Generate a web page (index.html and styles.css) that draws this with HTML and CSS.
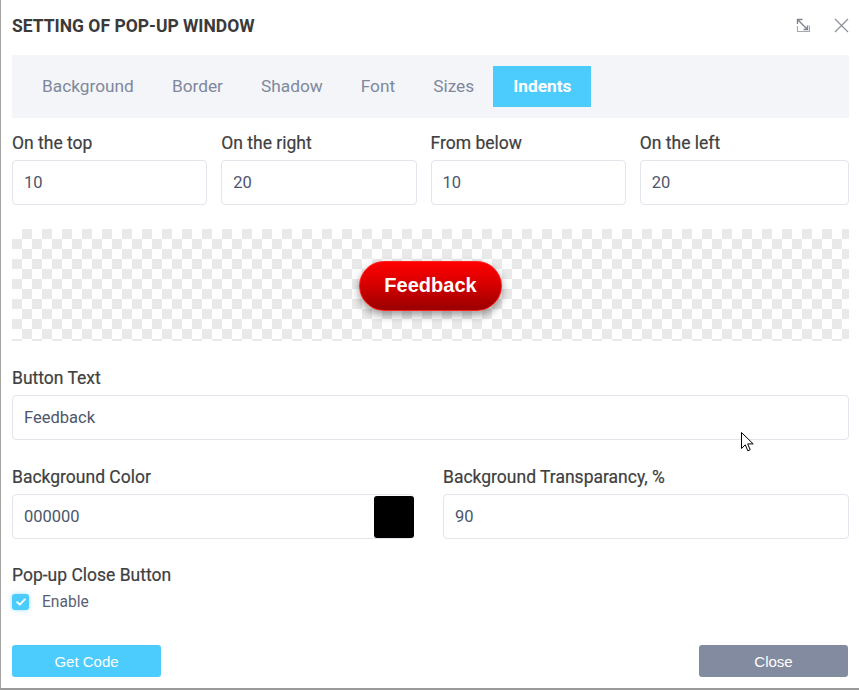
FILE: index.html
```html
<!DOCTYPE html>
<html>
<head>
<meta charset="utf-8">
<link rel="stylesheet" href="styles.css">
</head>
<body>
<div class="dialog">
  <div class="header">
    <div class="title">SETTING OF POP-UP WINDOW</div>
    <div class="actions">
      <svg class="icon" width="15" height="15" viewBox="0 0 15 15">
        <path d="M1.5 8V13.5H13.5V7.5M1.5 1.5H7" fill="none" stroke="#a4a8b0" stroke-width="1.1"/>
        <path d="M1.5 6V1.5H6M1.5 1.5L11.5 11.5M7.5 11.5H11.5V7.5" fill="none" stroke="#80858f" stroke-width="1.4"/>
      </svg>
      <svg class="icon" width="15" height="15" viewBox="0 0 15 15">
        <path d="M1 1L14 14M14 1L1 14" fill="none" stroke="#8b909a" stroke-width="1.2"/>
      </svg>
    </div>
  </div>

  <div class="tabs">
    <div class="tab">Background</div>
    <div class="tab">Border</div>
    <div class="tab">Shadow</div>
    <div class="tab">Font</div>
    <div class="tab">Sizes</div>
    <div class="tab active">Indents</div>
  </div>

  <div class="grid4">
    <div class="field">
      <div class="label">On the top</div>
      <div class="input">10</div>
    </div>
    <div class="field">
      <div class="label">On the right</div>
      <div class="input">20</div>
    </div>
    <div class="field">
      <div class="label">From below</div>
      <div class="input">10</div>
    </div>
    <div class="field last">
      <div class="label">On the left</div>
      <div class="input">20</div>
    </div>
  </div>

  <div class="preview">
    <div class="feedback">Feedback</div>
  </div>

  <div class="block">
    <div class="label">Button Text</div>
    <div class="input">Feedback</div>
  </div>

  <div class="grid2">
    <div class="field2">
      <div class="label">Background Color</div>
      <div class="input color">
        <span>000000</span>
        <span class="swatch"></span>
      </div>
    </div>
    <div class="field2">
      <div class="label">Background Transparancy, %</div>
      <div class="input">90</div>
    </div>
  </div>

  <div class="block close-block">
    <div class="label">Pop-up Close Button</div>
    <div class="check-row">
      <span class="checkbox">
        <svg width="10" height="8" viewBox="0 0 10 8"><path d="M1.2 4.2L3.8 6.6L8.8 1.4" fill="none" stroke="#fff" stroke-width="1.8" stroke-linecap="round" stroke-linejoin="round"/></svg>
      </span>
      <span class="check-label">Enable</span>
    </div>
  </div>

  <div class="footer">
    <div class="btn primary">Get Code</div>
    <div class="btn secondary">Close</div>
  </div>

  <svg class="cursor" width="14" height="21" viewBox="0 0 14 21">
    <path d="M0.5 0.5V16.5L4.3 12.8L6.8 18.8L9.2 17.8L6.7 11.9H12.2Z" fill="#fff" stroke="#000" stroke-width="1" stroke-linejoin="round"/>
  </svg>
</div>
</body>
</html>
```

FILE: styles.css
```css
* { box-sizing: border-box; }

html, body {
  margin: 0;
  padding: 0;
  background: #ffffff;
}

body {
  font-family: Roboto, "Liberation Sans", Arial, sans-serif;
}

.dialog {
  position: relative;
  width: 859px;
  height: 690px;
  border-left: 1px solid #a3a3a3;
  border-bottom: 2px solid #9a9a9a;
  padding: 0 10px 0 11px;
  background: #fff;
}

.header {
  height: 55px;
  display: flex;
  align-items: center;
  justify-content: space-between;
  padding-bottom: 4px;
}

.title {
  font-size: 17.5px;
  font-weight: 700;
  color: #3a3a3a;
}

.actions {
  display: flex;
  gap: 23px;
  align-items: center;
}

.icon { display: block; }

.tabs {
  height: 63px;
  background: #f4f5f9;
  display: flex;
  align-items: center;
  padding-left: 11px;
}

.tab {
  height: 41px;
  line-height: 41px;
  padding: 0 19px;
  font-size: 17.3px;
  color: #7f889c;
}

.tab.active {
  background: #4ccbfd;
  color: #fff;
  font-weight: 700;
  padding: 0 20px;
}

.grid4 {
  display: grid;
  grid-template-columns: repeat(4, 1fr);
  margin-top: 15px;
}

.field { padding-right: 14px; }
.field.last { padding-right: 0; }

.label {
  font-size: 17.5px;
  font-weight: 400;
  line-height: 20px;
  color: #404040;
  margin-bottom: 7px;
  -webkit-text-stroke: 0.2px #404040;
}

.input {
  height: 45px;
  border: 1px solid #e3e5ec;
  border-radius: 4px;
  background: #fff;
  padding: 0 11px;
  display: flex;
  align-items: center;
  font-size: 16.5px;
  color: #4d566c;
}

.preview {
  margin-top: 24px;
  height: 112px;
  background-color: #fff;
  background-image:
    linear-gradient(45deg, #e9e9e9 25%, transparent 25%, transparent 75%, #e9e9e9 75%),
    linear-gradient(45deg, #e9e9e9 25%, transparent 25%, transparent 75%, #e9e9e9 75%);
  background-size: 20px 20px;
  background-position: 0 0, 10px 10px;
  display: flex;
  align-items: center;
  justify-content: center;
}

.feedback {
  width: 143px;
  height: 50px;
  border-radius: 25px;
  background: linear-gradient(to bottom, #ff0000 0%, #d80000 45%, #990000 100%);
  border: 1px solid #ff2020;
  box-shadow: 0 4px 9px rgba(0, 0, 0, 0.4);
  display: flex;
  align-items: center;
  justify-content: center;
  font-family: "Liberation Sans", Arial, sans-serif;
  font-weight: 700;
  font-size: 20px;
  color: #fff;
  margin-top: 1px;
}

.block { margin-top: 27px; }

.grid2 {
  display: grid;
  grid-template-columns: 402px 1fr;
  column-gap: 29px;
  margin-top: 27px;
}

.input.color {
  justify-content: space-between;
  padding-right: 0;
}

.swatch {
  width: 40px;
  height: 42px;
  background: #000;
  border-radius: 3px;
  margin-right: -1px;
}

.close-block { margin-top: 26px; }

.close-block .label { margin-bottom: 9px; }

.check-row {
  display: flex;
  align-items: center;
  height: 16px;
}

.checkbox {
  width: 17px;
  height: 16px;
  border-radius: 3px;
  background: #4ccbfd;
  box-shadow: 0 0 4px rgba(76, 203, 253, 0.6);
  display: flex;
  align-items: center;
  justify-content: center;
}

.check-label {
  margin-left: 13px;
  font-size: 15.6px;
  color: #5a6176;
}

.footer {
  display: flex;
  justify-content: space-between;
  margin-top: 35px;
  padding-right: 1px;
}

.btn {
  width: 149px;
  height: 32px;
  border-radius: 3px;
  display: flex;
  align-items: center;
  justify-content: center;
  font-family: "Liberation Sans", Arial, sans-serif;
  font-size: 15px;
  color: #fff;
}

.btn.primary { background: #4ccbfd; }
.btn.secondary { background: #838ba0; }

.cursor {
  position: absolute;
  left: 740px;
  top: 432px;
}
```
